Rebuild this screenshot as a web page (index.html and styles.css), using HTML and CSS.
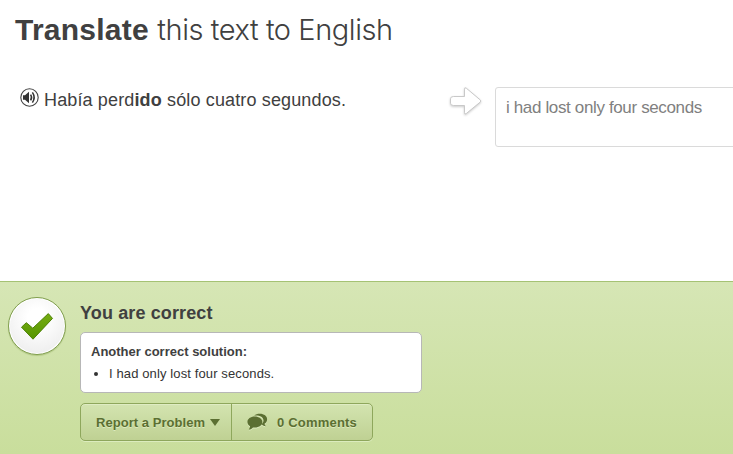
FILE: index.html
```html
<!DOCTYPE html>
<html lang="en">
<head>
<meta charset="utf-8">
<title>Translate this text</title>
<link rel="stylesheet" href="styles.css">
</head>
<body>
<main class="exercise">
  <h1 class="title"><strong>Translate</strong> <span class="light">this text to English</span></h1>
  <div class="columns">
    <div class="source">
      <svg class="speaker" width="19" height="19" viewBox="0 0 19 19"><circle cx="9.500" cy="9.500" r="8.700" fill="#fff" stroke="#444" stroke-width="1.100"/><path d="M3 7.300h2l4-3.500v11.400L5 11.800H3z" fill="#333"/><path d="M10.600 6.600q2 2.900 0 5.800" fill="none" stroke="#333" stroke-width="1.500"/><path d="M12.400 4.400q3.500 5.100 0 10.200" fill="none" stroke="#333" stroke-width="1.500"/></svg>
      <p class="sentence">Había perd<b>ido</b> sólo cuatro segundos.</p>
    </div>
    <svg class="arrow" width="36" height="34" viewBox="0 0 36 34"><path d="M4.500 9.500H15.500V2.200Q15.500 -0.200 17.300 1.200L31.300 13q1 1 0 2L17.300 26.500Q15.500 28 15.500 25.700V18.500H4.500Q1.500 18.500 1.500 16.200V11.800Q1.500 9.500 4.500 9.500z" fill="#fff" stroke="#c9c9c9"/></svg>
    <div class="answer"><span>i had lost only four seconds</span></div>
  </div>
</main>
<section class="result">
  <div class="badge">
    <svg width="34" height="30" viewBox="0 0 34 30"><defs><linearGradient id="tick" x2="0" y2="1"><stop stop-color="#76ad12"/><stop offset="1" stop-color="#559500"/></linearGradient></defs><path d="M1.500 16.200 6.300 11.700 12.800 17.200 28.300 2.600 32.500 7.400 13 28.200z" fill="url(#tick)" stroke="#4d8205" stroke-linejoin="round"/></svg>
  </div>
  <div class="feedback">
    <h2>You are correct</h2>
    <div class="solution">
      <h3>Another correct solution:</h3>
      <ul><li>I had only lost four seconds.</li></ul>
    </div>
    <div class="actions">
      <div class="action report"><span>Report a Problem</span><i class="caret"></i></div>
      <div class="action comments">
        <svg width="21" height="18" viewBox="0 0 21 18"><path d="M7.200 2.500C8.600 1.200 10.500.7 12.800.7c4.300 0 7.300 2.400 7.300 5.500 0 2-1 3.500-2.600 4.500.2 1.200.8 1.900 1.500 2.600-1.800 0-3-.6-4.100-1.700l-1.400.1c2.200-1.100 3-2.600 3-4.300C16.500 4 12.500 2 7.200 2.500z" fill="#5b6f32"/><path d="M7.700 3.500C3.600 3.500.4 5.900.4 9c0 1.900 1.200 3.400 2.700 4.300-.1 1.300-.6 2.300-1.400 3.200 2-.1 3.300-1 4.300-2.100 5.500.7 9.300-1.900 9.300-5.400 0-3.100-3.300-5.500-7.600-5.500z" fill="#5b6f32"/></svg>
        <span>0 Comments</span>
      </div>
    </div>
  </div>
</section>
</body>
</html>
```
FILE: styles.css
```css
* { box-sizing: border-box; }
body {
  margin: 0;
  height: 454px;
  overflow: hidden;
  display: flex;
  flex-direction: column;
  background: #fff;
  color: #404040;
  font-family: "Liberation Sans", Arial, sans-serif;
}
h1, h2, h3, p, ul { margin: 0; padding: 0; }
.exercise { height: 281px; padding: 12px 0 0 15px; overflow: hidden; }
.title { font-size: 30px; line-height: 36px; font-weight: 400; white-space: nowrap; }
.title strong { letter-spacing: 0.25px; }
.light { font-family: Inter, sans-serif; font-weight: 300; font-size: 29px; letter-spacing: -0.43px; }
.columns { display: flex; margin-top: 39px; white-space: nowrap; }
.source { display: flex; flex: none; width: 434px; padding-left: 5px; }
.speaker { margin-top: 1px; }
.sentence { margin-left: 5px; font-size: 18px; line-height: 26px; letter-spacing: 0.14px; }
.arrow { flex: none; filter: drop-shadow(0 1px 1px #ccc); }
.answer {
  width: 300px;
  height: 60px;
  flex: none;
  margin-left: 10px;
  padding: 8px 10px;
  border: 1px solid #dadada;
  border-radius: 3px;
  color: #808080;
  font-size: 17px;
  line-height: 24px;
  letter-spacing: -0.36px;
}
.result {
  flex: 1;
  display: flex;
  padding: 15px 0 0 8px;
  border-top: 1px solid #a5c274;
  background: linear-gradient(#d6e6b5, #c9de9c);
}
.badge {
  display: flex;
  align-items: center;
  justify-content: center;
  width: 58px;
  height: 58px;
  border: 1px solid #819f4e;
  border-radius: 50%;
  background: radial-gradient(circle at 50% 35%, #fff 20%, #e8e8e8 100%);
  box-shadow: 0 1px 1px #b2c885, inset 0 0 0 1px #fff;
}
.feedback { margin-left: 14px; white-space: nowrap; }
h2 { font-size: 18px; line-height: 24px; margin-top: 4px; letter-spacing: 0.12px; }
.solution {
  width: 342px;
  height: 61px;
  margin-top: 7px;
  padding: 10px;
  border: 1px solid #b7b7b7;
  border-radius: 5px;
  background: #fff;
}
h3 { font-size: 13px; line-height: 18px; }
ul { padding-left: 18px; margin-top: 4px; font-size: 13px; line-height: 18px; color: #333; letter-spacing: 0.12px; }
.actions {
  display: flex;
  width: 293px;
  height: 38px;
  margin-top: 10px;
  border: 1px solid #8ea75c;
  border-radius: 5px;
  background: linear-gradient(#d3e4b0, #bfd193);
  box-shadow: 0 1px 0 #dcecbe, inset 0 1px 0 #dfecc3;
  color: #5b6f32;
  font-size: 13px;
  font-weight: 700;
  text-shadow: 0 1px 0 #dceabd;
}
.action { display: flex; align-items: center; padding-left: 15px; }
.report { width: 151px; border-right: 1px solid #8ea75c; }
.report span { letter-spacing: 0.05px; }
.caret { margin-left: 5px; border: 5px solid transparent; border-top: 7px solid #5b6f32; border-bottom: 0; }
.comments span { margin-left: 9px; letter-spacing: 0.2px; }
.comments svg { filter: drop-shadow(0 1px 0 #dceabd); }
```
